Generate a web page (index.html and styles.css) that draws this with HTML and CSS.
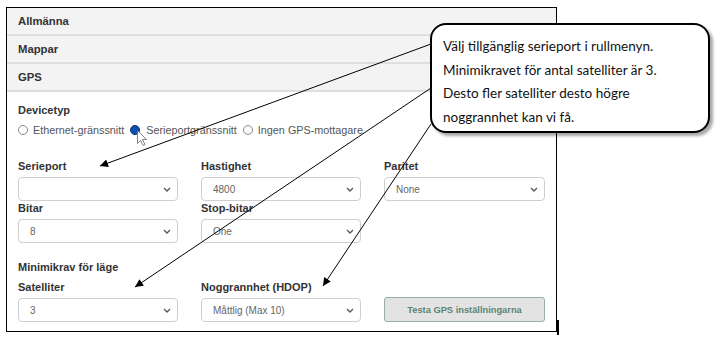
FILE: index.html
```html
<!DOCTYPE html>
<html lang="sv">
<head>
    <meta charset="UTF-8">
    <meta name="viewport" content="width=device-width, initial-scale=1.0">
    <title>GPS - Inställningar</title>
    <link rel="stylesheet" href="styles.css">
</head>
<body>
    <div class="page">
        <!-- Screenshot of the settings page -->
        <div class="shot">
            <div class="acc-head">Allmänna</div>
            <div class="acc-head">Mappar</div>
            <div class="acc-head">GPS</div>

            <div class="acc-body">
                <div class="group-title">Devicetyp</div>
                <div class="radios">
                    <span class="radio-item"><span class="radio"></span>Ethernet-gränssnitt</span>
                    <span class="radio-item"><span class="radio checked"></span>Serieportgränssnitt</span>
                    <span class="radio-item"><span class="radio"></span>Ingen GPS-mottagare</span>
                </div>

                <div class="grid first-grid">
                    <div class="field">
                        <div class="label">Serieport</div>
                        <div class="select"><span></span><svg class="chev" width="8" height="5" viewBox="0 0 8 5"><path d="M1 1 L4 4 L7 1" /></svg></div>
                    </div>
                    <div class="field">
                        <div class="label">Hastighet</div>
                        <div class="select"><span>4800</span><svg class="chev" width="8" height="5" viewBox="0 0 8 5"><path d="M1 1 L4 4 L7 1" /></svg></div>
                    </div>
                    <div class="field">
                        <div class="label">Paritet</div>
                        <div class="select"><span>None</span><svg class="chev" width="8" height="5" viewBox="0 0 8 5"><path d="M1 1 L4 4 L7 1" /></svg></div>
                    </div>
                    <div class="field">
                        <div class="label">Bitar</div>
                        <div class="select"><span>8</span><svg class="chev" width="8" height="5" viewBox="0 0 8 5"><path d="M1 1 L4 4 L7 1" /></svg></div>
                    </div>
                    <div class="field">
                        <div class="label">Stop-bitar</div>
                        <div class="select"><span>One</span><svg class="chev" width="8" height="5" viewBox="0 0 8 5"><path d="M1 1 L4 4 L7 1" /></svg></div>
                    </div>
                </div>

                <div class="group-title min-title">Minimikrav för läge</div>
                <div class="grid second-grid">
                    <div class="field">
                        <div class="label">Satelliter</div>
                        <div class="select"><span>3</span><svg class="chev" width="8" height="5" viewBox="0 0 8 5"><path d="M1 1 L4 4 L7 1" /></svg></div>
                    </div>
                    <div class="field">
                        <div class="label">Noggrannhet (HDOP)</div>
                        <div class="select"><span>Måttlig (Max 10)</span><svg class="chev" width="8" height="5" viewBox="0 0 8 5"><path d="M1 1 L4 4 L7 1" /></svg></div>
                    </div>
                    <div class="field button-field">
                        <button class="test-btn">Testa GPS inställningarna</button>
                    </div>
                </div>
            </div>
        </div>

        <!-- Callout arrows and mouse cursor -->
        <svg class="arrows" width="719" height="349" viewBox="0 0 719 349">
            <defs>
                <marker id="head" viewBox="0 0 10 10" refX="10" refY="5" markerWidth="11" markerHeight="8" markerUnits="userSpaceOnUse" orient="auto">
                    <path d="M0 0 L10 5 L0 10 Z" fill="#000" />
                </marker>
            </defs>
            <line x1="431" y1="44" x2="100" y2="166" stroke="#000" stroke-width="1" marker-end="url(#head)" />
            <line x1="431" y1="88" x2="135" y2="287" stroke="#000" stroke-width="1" marker-end="url(#head)" />
            <line x1="431" y1="124" x2="323" y2="286" stroke="#000" stroke-width="1" marker-end="url(#head)" />
            <path class="cursor" transform="translate(137.5 130.5)" d="M0 0 L0 13 L3 10 L5.5 15 L7.5 14 L5 9 L9 9 Z" />
            <!-- frame shadow at the bottom right -->
            <rect x="557" y="320" width="2" height="15" fill="#000" />
        </svg>

        <!-- Callout -->
        <div class="callout">
            Välj tillgänglig serieport i rullmenyn.<br>
            Minimikravet för antal satelliter är 3.<br>
            Desto fler satelliter desto högre<br>
            noggrannhet kan vi få.
        </div>
    </div>
</body>
</html>
```

FILE: styles.css
```css
/* General */
body {
    margin: 0;
    background: #fff;
    font-family: "Liberation Sans", Arial, sans-serif;
}

.page {
    position: relative;
    width: 719px;
    height: 349px;
    overflow: hidden;
}

/* Screenshot frame */
.shot {
    margin: 7px 0 0 6px;
    width: 549px;
    border: 1px solid #000;
    background: #fff;
}

.acc-head {
    height: 26px;
    line-height: 26px;
    padding-left: 11px;
    background: #f3f3f3;
    border-bottom: 2px solid #dedede;
    font-size: 11.3px;
    font-weight: bold;
    color: #333;
}

.acc-body {
    padding: 0 11px 9px;
}

.group-title {
    margin-top: 11px;
    line-height: 14px;
    font-size: 11px;
    font-weight: bold;
    color: #333;
}

.min-title {
    margin-top: 17px;
}

/* Radios */
.radios {
    display: flex;
    align-items: center;
    height: 16px;
    margin-top: 5px;
    font-size: 10.8px;
    color: #555;
}

.radio-item {
    display: flex;
    align-items: center;
    margin-right: 6px;
}

.radio {
    width: 8px;
    height: 8px;
    margin-right: 5px;
    border: 1px solid #8a8a8a;
    border-radius: 50%;
    background: #fff;
}

.radio.checked {
    margin-right: 6px;
    background: #0d4fb0;
    border: 1px solid #0a2f6e;
}

/* Form grid */
.grid {
    display: grid;
    grid-template-columns: 160px 160px 161px;
    column-gap: 23px;
}

.first-grid {
    margin-top: 21px;
}

.second-grid {
    margin-top: 6px;
}

.field {
    display: flex;
    flex-direction: column;
}

.label {
    line-height: 14px;
    margin-bottom: 4px;
    font-size: 11px;
    font-weight: bold;
    color: #333;
}

.select {
    display: flex;
    align-items: center;
    justify-content: space-between;
    box-sizing: border-box;
    height: 24px;
    padding: 0 6px 0 11px;
    border: 1px solid #cfcfcf;
    border-radius: 4px;
    background: #fff;
    font-size: 10px;
    color: #666;
}

.chev path {
    fill: none;
    stroke: #555;
    stroke-width: 1.3;
}

.button-field {
    justify-content: flex-end;
}

.test-btn {
    height: 25px;
    padding: 0;
    border: 1px solid #98b0a3;
    border-radius: 3px;
    background: #e3e3e3;
    font-family: "Liberation Sans", Arial, sans-serif;
    font-size: 9.3px;
    font-weight: bold;
    color: #5a8573;
}

/* Overlay */
.arrows {
    position: absolute;
    top: 0;
    left: 0;
    pointer-events: none;
}

.cursor {
    fill: #fff;
    stroke: #666;
    stroke-width: 0.8;
}

.callout {
    position: absolute;
    top: 23px;
    left: 430px;
    box-sizing: border-box;
    width: 280px;
    height: 110px;
    padding: 10px 6px 0 11px;
    border: 2px solid #000;
    border-radius: 16px;
    background: #fff;
    box-shadow: 3px 3px 3px rgba(0, 0, 0, 0.35);
    font-family: Lato, "Open Sans", sans-serif;
    font-size: 13.5px;
    line-height: 23.5px;
    color: #111;
}
```
